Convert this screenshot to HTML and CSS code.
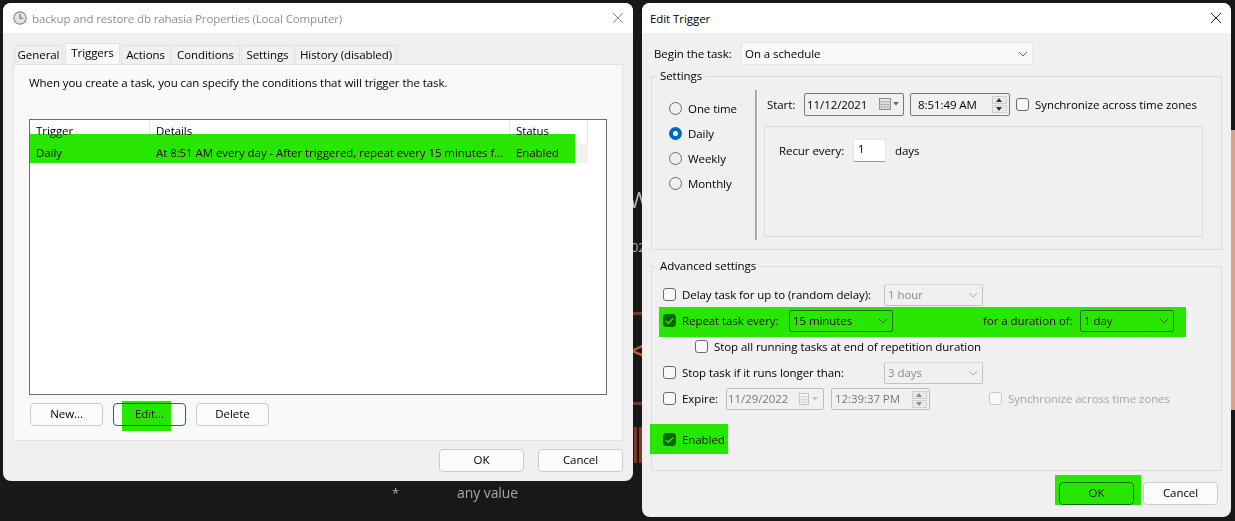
FILE: index.html
```html
<!DOCTYPE html>
<html lang="en">
<head>
    <meta charset="UTF-8">
    <title>Edit Trigger</title>
    <link rel="stylesheet" href="styles.css">
</head>
<body>
    <div class="backdrop">
        <div class="bg-glyph bg-w">W</div>
        <div class="bg-glyph bg-num">02</div>
        <div class="bg-glyph bg-lt">&lt;</div>
        <div class="bg-line bg-line-a"></div>
        <div class="bg-line bg-line-b"></div>
        <div class="bg-bar bg-bar-a"></div>
        <div class="bg-bar bg-bar-b"></div>
        <div class="bg-edge"></div>
        <div class="bg-star">*</div>
        <div class="bg-value">any value</div>
    </div>

    <!-- task properties window -->
    <div class="dialog props">
        <div class="titlebar">
            <svg class="clock" width="14" height="14" viewBox="0 0 14 14">
                <circle cx="7" cy="7" r="6.2" fill="#e4e4e0" stroke="#8b8b88" stroke-width="1.2"/>
                <path d="M7 3v4.2h3.2" fill="none" stroke="#666" stroke-width="1.1"/>
            </svg>
            <span class="title muted">backup and restore db rahasia Properties (Local Computer)</span>
            <svg class="close" width="12" height="12" viewBox="0 0 12 12"><path d="M1 1l10 10M11 1L1 11" stroke="#8a8a8a" stroke-width="1"/></svg>
        </div>
        <div class="props-body">
            <div class="tabs">
                <div class="tab tab-general">General</div>
                <div class="tab tab-triggers active">Triggers</div>
                <div class="tab tab-actions">Actions</div>
                <div class="tab tab-conditions">Conditions</div>
                <div class="tab tab-settings">Settings</div>
                <div class="tab tab-history">History (disabled)</div>
            </div>
            <div class="tab-panel">
                <p class="intro">When you create a task, you can specify the conditions that will trigger the task.</p>
                <div class="list">
                    <div class="list-head">
                        <div class="col col-trigger">Trigger</div>
                        <div class="col col-details">Details</div>
                        <div class="col col-status">Status</div>
                    </div>
                    <div class="list-row">
                        <div class="cell col-trigger">Daily</div>
                        <div class="cell col-details">At 8:51 AM every day - After triggered, repeat every 15 minutes f...</div>
                        <div class="cell col-status">Enabled</div>
                    </div>
                </div>
                <div class="list-buttons">
                    <button class="btn btn-list">New...</button>
                    <button class="btn btn-list focused">Edit...</button>
                    <button class="btn btn-list">Delete</button>
                </div>
            </div>
            <div class="footer">
                <button class="btn btn-footer">OK</button>
                <button class="btn btn-footer">Cancel</button>
            </div>
        </div>
        <div class="mark mark-row"></div>
        <div class="mark mark-edit"></div>
    </div>

    <!-- edit trigger window -->
    <div class="dialog trigger">
        <div class="titlebar">
            <span class="title title-trigger">Edit Trigger</span>
            <svg class="close" width="12" height="12" viewBox="0 0 12 12"><path d="M1 1l10 10M11 1L1 11" stroke="#222" stroke-width="1"/></svg>
        </div>
        <div class="trigger-body">
            <div class="row begin-row">
                <span class="begin-label">Begin the task:</span>
                <div class="select select-begin">On a schedule<svg class="chev" width="10" height="6" viewBox="0 0 10 6"><path d="M1 1l4 4 4-4" fill="none" stroke="#666"/></svg></div>
            </div>

            <fieldset class="group group-settings">
                <legend>Settings</legend>
                <div class="schedule">
                    <div class="radios">
                        <label class="radio-row"><span class="radio"></span>One time</label>
                        <label class="radio-row"><span class="radio on"></span>Daily</label>
                        <label class="radio-row"><span class="radio"></span>Weekly</label>
                        <label class="radio-row"><span class="radio"></span>Monthly</label>
                    </div>
                    <div class="schedule-main">
                        <div class="row start-row">
                            <span class="start-label">Start:</span>
                            <div class="field field-date">11/12/2021
                                <svg class="cal" width="20" height="14" viewBox="0 0 20 14">
                                    <rect x="0.5" y="1.5" width="11" height="11" fill="#e8e8e8" stroke="#8c8c8c"/>
                                    <path d="M0 4.5h12M3 4v8M6 4v8M9 4v8M0 7.5h12M0 10h12" stroke="#a8a8a8" stroke-width="0.7"/>
                                    <path d="M14 5h6l-3 3.5z" fill="#5d6b80"/>
                                </svg>
                            </div>
                            <div class="field field-time">8:51:49 AM
                                <div class="spin"><span class="spin-btn up"></span><span class="spin-btn down"></span></div>
                            </div>
                            <label class="check-row sync"><span class="check"></span>Synchronize across time zones</label>
                        </div>
                        <div class="recur-box">
                            <span class="recur-label">Recur every:</span>
                            <div class="recur-input">1</div>
                            <span class="recur-days">days</span>
                        </div>
                    </div>
                </div>
            </fieldset>

            <fieldset class="group group-advanced">
                <legend>Advanced settings</legend>
                <div class="row adv-row delay-row">
                    <label class="check-row label-long"><span class="check"></span>Delay task for up to (random delay):</label>
                    <div class="select select-off">1 hour<svg class="chev" width="10" height="6" viewBox="0 0 10 6"><path d="M1 1l4 4 4-4" fill="none" stroke="#aaa"/></svg></div>
                </div>
                <div class="row adv-row repeat-row">
                    <label class="check-row label-repeat"><span class="check checked"><svg width="9" height="8" viewBox="0 0 9 8"><path d="M1 4l2.4 2.4L8 1.4" fill="none" stroke="#fff" stroke-width="1.1"/></svg></span>Repeat task every:</label>
                    <div class="select select-every">15 minutes<svg class="chev" width="10" height="6" viewBox="0 0 10 6"><path d="M1 1l4 4 4-4" fill="none" stroke="#555"/></svg></div>
                    <span class="duration-label">for a duration of:</span>
                    <div class="select select-duration">1 day<svg class="chev" width="10" height="6" viewBox="0 0 10 6"><path d="M1 1l4 4 4-4" fill="none" stroke="#555"/></svg></div>
                </div>
                <div class="row adv-row stop-all-row">
                    <label class="check-row"><span class="check"></span>Stop all running tasks at end of repetition duration</label>
                </div>
                <div class="row adv-row stop-row">
                    <label class="check-row label-long"><span class="check"></span>Stop task if it runs longer than:</label>
                    <div class="select select-off">3 days<svg class="chev" width="10" height="6" viewBox="0 0 10 6"><path d="M1 1l4 4 4-4" fill="none" stroke="#aaa"/></svg></div>
                </div>
                <div class="row adv-row expire-row">
                    <label class="check-row label-expire"><span class="check"></span>Expire:</label>
                    <div class="field field-off field-off-date">11/29/2022
                        <svg class="cal" width="20" height="14" viewBox="0 0 20 14">
                            <rect x="0.5" y="1.5" width="9" height="11" fill="#f4f4f4" stroke="#c4c4c4"/>
                            <path d="M0 4.5h10M3 4v8M6 4v8M0 7.5h10M0 10h10" stroke="#cfcfcf" stroke-width="0.7"/>
                            <path d="M13 5h6l-3 3.5z" fill="#c0c0c0"/>
                        </svg>
                    </div>
                    <div class="field field-off field-off-time">12:39:37 PM
                        <div class="spin off"><span class="spin-btn up"></span><span class="spin-btn down"></span></div>
                    </div>
                    <label class="check-row sync-off"><span class="check"></span>Synchronize across time zones</label>
                </div>
                <div class="row adv-row enabled-row">
                    <label class="check-row"><span class="check checked"><svg width="9" height="8" viewBox="0 0 9 8"><path d="M1 4l2.4 2.4L8 1.4" fill="none" stroke="#fff" stroke-width="1.1"/></svg></span>Enabled</label>
                </div>
            </fieldset>

            <div class="trigger-footer">
                <button class="btn btn-trigger btn-ok">OK</button>
                <button class="btn btn-trigger">Cancel</button>
            </div>
        </div>
        <div class="mark mark-repeat"></div>
        <div class="mark mark-enabled"></div>
        <div class="mark mark-ok"></div>
    </div>
</body>
</html>
```

FILE: styles.css
```css
* {
    box-sizing: border-box;
}
body {
    margin: 0;
    width: 1235px;
    height: 521px;
    position: relative;
    overflow: hidden;
    background-color: #17181a;
    font-family: 'Open Sans', 'Noto Sans', sans-serif;
    font-size: 11.5px;
    letter-spacing: -0.07px;
    color: #000;
}
button {
    font: inherit;
    color: inherit;
    letter-spacing: inherit;
}

/* what shows behind the windows */
.bg-glyph {
    position: absolute;
    color: #b5b5b5;
}
.bg-w {
    left: 629px;
    top: 184px;
    font-size: 22px;
}
.bg-num {
    left: 631px;
    top: 238px;
    font-size: 13px;
}
.bg-lt {
    left: 630px;
    top: 333px;
    font-size: 24px;
    font-weight: 700;
    color: #c0593c;
}
.bg-line {
    position: absolute;
    left: 633px;
    width: 9px;
    height: 3px;
    background-color: #7a3a22;
}
.bg-line-a {
    top: 312px;
}
.bg-line-b {
    top: 402px;
}
.bg-bar {
    position: absolute;
    top: 427px;
    width: 3px;
    height: 36px;
    background-color: #80391f;
}
.bg-bar-a {
    left: 634px;
}
.bg-bar-b {
    left: 639px;
}
.bg-edge {
    position: absolute;
    left: 1231px;
    top: 130px;
    width: 4px;
    height: 280px;
    background-color: #d2a48d;
}
.bg-star {
    position: absolute;
    left: 392px;
    top: 484px;
    color: #b0b0b0;
    font-size: 13px;
}
.bg-value {
    position: absolute;
    left: 457px;
    top: 483px;
    color: #a6a6a6;
    font-size: 14px;
}

/* windows */
.dialog {
    position: absolute;
    top: 3px;
    border-radius: 8px;
    background-color: #f0f0f0;
    overflow: hidden;
}
.props {
    left: 3px;
    width: 630px;
    height: 478px;
}
.trigger {
    left: 642px;
    width: 589px;
    height: 514px;
}
.titlebar {
    display: flex;
    align-items: center;
    height: 30px;
    background-color: #fff;
    padding: 0 9px 0 10px;
}
.clock {
    margin-right: 5px;
}
.title {
    flex: 1;
    font-size: 11.5px;
}
.muted {
    color: #8f8f8f;
    letter-spacing: -0.12px;
}
.title-trigger {
    margin-left: -2px;
}
.mark {
    position: absolute;
    background-color: #27e600;
    mix-blend-mode: darken;
}

/* properties window */
.props-body {
    padding: 10px 10px 0;
}
.tabs {
    display: flex;
    align-items: flex-end;
    height: 21px;
    padding-left: 1px;
}
.tab {
    height: 19px;
    line-height: 18px;
    text-align: center;
    background-color: #f0f0f0;
    border: 1px solid #e2e2e2;
    border-bottom: 0;
    margin-right: 1px;
}
.tab.active {
    height: 21px;
    line-height: 18px;
    background-color: #f9f9f9;
}
.tab-general { width: 49px; margin-right: 2px; }
.tab-triggers { width: 55px; }
.tab-actions { width: 49px; }
.tab-conditions { width: 69px; }
.tab-settings { width: 53px; }
.tab-history { width: 102px; }
.tab-panel {
    width: 610px;
    height: 377px;
    background-color: #f9f9f9;
    border: 1px solid #e2e2e2;
    padding: 10px 15px 0;
}
.intro {
    margin: 0;
    height: 44px;
    line-height: 16px;
}
.list {
    width: 578px;
    height: 276px;
    background-color: #fff;
    border: 1px solid #6e6e6e;
}
.list-head {
    display: flex;
    height: 24px;
}
.list-row {
    display: flex;
    height: 19px;
    width: 558px;
    background-color: #f0f0f0;
    line-height: 18px;
}
.col {
    padding-top: 3px;
    border-right: 1px solid #e5e5e5;
}
.cell {
    white-space: nowrap;
}
.col-trigger {
    width: 120px;
    padding-left: 6px;
}
.col-details {
    width: 360px;
    padding-left: 6px;
}
.col-status {
    width: 78px;
    padding-left: 6px;
}
.list-buttons {
    display: flex;
    gap: 10px;
    margin-top: 8px;
    padding-left: 1px;
}
.btn {
    background-color: #fbfbfb;
    border: 1px solid #cbcbcb;
    border-radius: 4px;
    padding: 0 0 2px;
    height: 23px;
    text-align: center;
}
.btn-list {
    width: 73px;
}
.focused {
    border-color: #0067c0;
}
.footer {
    display: flex;
    justify-content: flex-end;
    gap: 14px;
    margin-top: 8px;
}
.btn-footer {
    width: 85px;
}
.mark-row {
    left: 27px;
    top: 131px;
    width: 545px;
    height: 29px;
}
.mark-edit {
    left: 119px;
    top: 398px;
    width: 49px;
    height: 30px;
}

/* edit trigger window */
.trigger-body {
    padding: 9px 9px 0;
}
.row {
    display: flex;
    align-items: center;
}
.begin-row {
    height: 23px;
    padding-left: 3px;
}
.begin-label {
    width: 87px;
}
.select {
    display: flex;
    align-items: center;
    justify-content: space-between;
    height: 22px;
    padding: 0 4px 0 3px;
    border: 1px solid #707070;
    border-radius: 2px;
    white-space: nowrap;
}
.select-begin {
    width: 292px;
    height: 23px;
    background-color: #f9f9f9;
    border-color: #e6e6e6;
}
.group {
    margin: 0;
    padding: 0;
    width: 571px;
    border: 1px solid #dcdcdc;
    min-inline-size: 0;
}
.group legend {
    margin-left: 5px;
    padding: 0 3px;
    line-height: 14px;
}
.group-settings {
    margin-top: 4px;
    height: 181px;
}
.schedule {
    display: flex;
    padding-top: 7px;
}
.radios {
    width: 105px;
    height: 150px;
    border-right: 2px solid #a8a8a8;
    box-shadow: 1px 0 #fff;
    padding-top: 6px;
    padding-left: 17px;
}
.radio-row {
    display: flex;
    align-items: center;
    height: 25px;
}
.radio {
    width: 13px;
    height: 13px;
    margin-right: 6px;
    border: 1px solid #6a6a6a;
    border-radius: 50%;
}
.radio.on {
    border: 4px solid #0067c0;
    background-color: #fff;
}
.schedule-main {
    padding-left: 7px;
}
.start-row {
    height: 23px;
    margin-top: 3px;
}
.start-label {
    width: 40px;
    padding-left: 3px;
}
.field {
    position: relative;
    display: flex;
    align-items: center;
    height: 23px;
    padding-left: 2px;
    border: 1px solid #7a7a7a;
    border-radius: 2px;
}
.field-date {
    width: 100px;
}
.field-time {
    width: 100px;
    margin-left: 6px;
    padding-left: 7px;
}
.cal {
    position: absolute;
    right: 4px;
    top: 3px;
}
.spin {
    position: absolute;
    right: 2px;
    top: 2px;
    display: flex;
    flex-direction: column;
    gap: 1px;
}
.spin-btn {
    position: relative;
    display: block;
    width: 15px;
    height: 8px;
    background-color: #e9e9e9;
    border: 1px solid #cfcfcf;
}
.spin-btn::after {
    content: '';
    position: absolute;
    left: 3px;
    border-left: 3.5px solid transparent;
    border-right: 3.5px solid transparent;
}
.spin-btn.up::after {
    top: 1px;
    border-bottom: 4px solid #333;
}
.spin-btn.down::after {
    top: 1px;
    border-top: 4px solid #333;
}
.spin.off .spin-btn.up::after {
    border-bottom-color: #8a8a8a;
}
.spin.off .spin-btn.down::after {
    border-top-color: #8a8a8a;
}
.check-row {
    display: flex;
    align-items: center;
    white-space: nowrap;
}
.check {
    display: flex;
    align-items: center;
    justify-content: center;
    flex: none;
    width: 13px;
    height: 13px;
    margin-right: 6px;
    border: 1px solid #6a6a6a;
    border-radius: 3px;
    background-color: #f8f8f8;
}
.check.checked {
    background-color: #0067c0;
    border-color: #0067c0;
}
.sync {
    margin-left: 6px;
}
.recur-box {
    display: flex;
    align-items: center;
    width: 439px;
    height: 111px;
    margin-top: 10px;
    padding: 0 0 62px 14px;
    border: 1px solid #dcdcdc;
}
.recur-label {
    width: 74px;
}
.recur-input {
    width: 33px;
    height: 23px;
    padding-left: 4px;
    line-height: 17px;
    background-color: #fff;
    border: 1px solid #e4e4e4;
    border-bottom-color: #9a9a9a;
}
.recur-days {
    margin-left: 9px;
}
.group-advanced {
    margin-top: 9px;
    height: 212px;
}
.adv-row {
    height: 25px;
    padding-left: 11px;
}
.delay-row {
    margin-top: 8px;
    height: 27px;
}
.label-long {
    width: 221px;
}
.select-off {
    width: 99px;
    color: #8a8a8a;
    border-color: #c2c2c2;
    border-top-color: #d6d6d6;
}
.label-repeat {
    width: 126px;
}
.select-every {
    width: 104px;
}
.duration-label {
    margin-left: 90px;
    width: 97px;
}
.select-duration {
    width: 94px;
}
.stop-all-row {
    height: 27px;
    padding-left: 43px;
}
.expire-row {
    height: 27px;
}
.label-expire {
    width: 63px;
}
.field-off {
    height: 22px;
    color: #777;
    border-color: #bdbdbd;
}
.field-off-date {
    width: 98px;
    padding-left: 1px;
}
.field-off-time {
    width: 99px;
    margin-left: 7px;
    padding-left: 3px;
}
.sync-off {
    margin-left: 59px;
    color: #a5a5a5;
}
.sync-off .check {
    border-color: #c8c8c8;
}
.enabled-row {
    margin-top: 15px;
}
.trigger-footer {
    display: flex;
    justify-content: flex-end;
    gap: 9px;
    margin-top: 11px;
    padding-right: 4px;
}
.btn-trigger {
    width: 75px;
}
.btn-ok {
    border-color: #0067c0;
}
.mark-repeat {
    left: 17px;
    top: 304px;
    width: 527px;
    height: 30px;
}
.mark-enabled {
    left: 8px;
    top: 421px;
    width: 78px;
    height: 30px;
}
.mark-ok {
    left: 413px;
    top: 472px;
    width: 86px;
    height: 30px;
}
```
